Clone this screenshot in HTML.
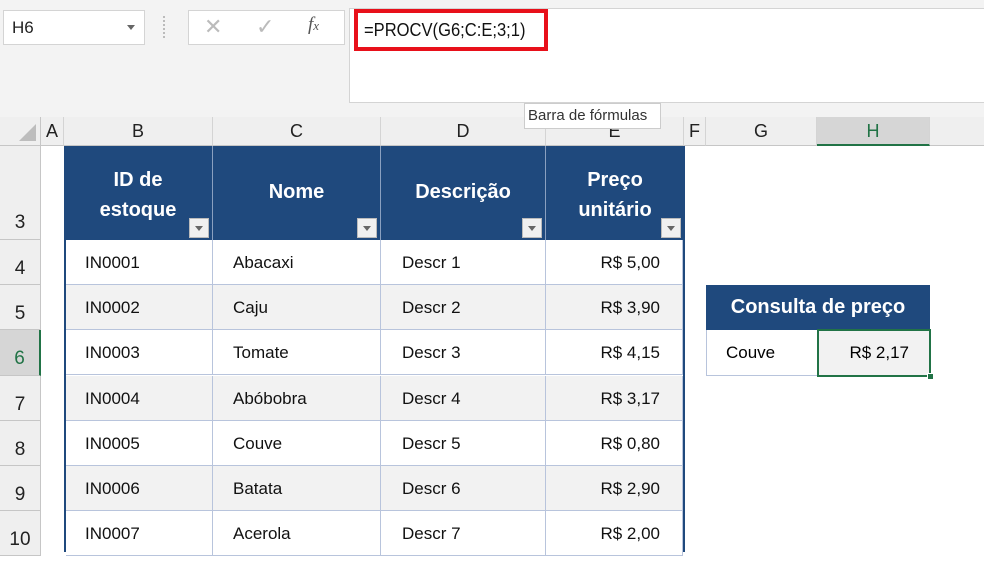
<!DOCTYPE html>
<html><head><meta charset="utf-8"><style>
*{margin:0;padding:0;box-sizing:border-box}
body{width:984px;height:552px;overflow:hidden;background:#fff;font-family:"Liberation Sans",Arial,sans-serif;position:relative}
.a{position:absolute}
.top{left:0;top:0;width:984px;height:117px;background:#f3f3f3}
.box{background:#fff;border:1px solid #d4d4d4}
.colh{top:117px;height:29px;background:#efefef;border-right:1px solid #d4d4d4;border-bottom:1px solid #c6c6c6;font-size:18px;color:#222;text-align:center;line-height:29px}
.rowh{left:0;width:41px;background:#efefef;border-bottom:1px solid #c6c6c6;border-right:1px solid #c6c6c6;font-size:19px;color:#222;text-align:center}
.cell{height:45px;border-right:1px solid #b8c4dc;border-bottom:1px solid #b8c4dc;font-size:17px;color:#111;line-height:45px}
.hd{top:146px;height:94px;background:#1f497d;color:#fff;font-weight:bold;font-size:20px;text-align:center;border-right:1px solid #8aa0c0}
.dd{position:absolute;width:20px;height:20px;background:#f0f0f0;border:1px solid #bbb;bottom:2px;right:3px}
.dd:after{content:"";position:absolute;left:5px;top:7px;border-left:4px solid transparent;border-right:4px solid transparent;border-top:5px solid #666}
</style></head><body>
<div class="a top"></div>
<div class="a box" style="left:3px;top:10px;width:142px;height:35px;font-size:17px;line-height:33px;padding-left:8px;color:#222">H6<span style="position:absolute;right:9px;top:14px;border-left:4px solid transparent;border-right:4px solid transparent;border-top:5px solid #666"></span></div>
<div class="a" style="left:163px;top:16px;width:2px;height:22px;border-left:2px dotted #bbb"></div>
<div class="a box" style="left:188px;top:10px;width:157px;height:35px"></div>
<div class="a" style="left:204px;top:14px;font-size:22px;color:#bbb">✕</div>
<div class="a" style="left:256px;top:14px;font-size:22px;color:#bbb">✓</div>
<div class="a" style="left:308px;top:14px;font-size:19px;color:#555;font-style:italic;font-family:'Liberation Serif',serif">f<span style="font-size:13px">x</span></div>
<div class="a box" style="left:349px;top:8px;width:640px;height:95px"></div>
<div class="a" style="left:354px;top:9px;width:194px;height:42px;border:4px solid #e8101a"></div>
<div class="a" style="left:364px;top:20px;font-size:18px;color:#111;transform:scaleX(0.92);transform-origin:left">=PROCV(G6;C:E;3;1)</div>
<div class="a colh" style="left:0;width:41px;border-right:1px solid #c6c6c6"><span style="position:absolute;left:19px;top:7px;border-left:17px solid transparent;border-bottom:17px solid #bdbdbd"></span></div>
<div class="a colh" style="left:41px;width:23px">A</div>
<div class="a colh" style="left:64px;width:149px">B</div>
<div class="a colh" style="left:213px;width:168px">C</div>
<div class="a colh" style="left:381px;width:165px">D</div>
<div class="a colh" style="left:546px;width:138px">E</div>
<div class="a colh" style="left:684px;width:22px">F</div>
<div class="a colh" style="left:706px;width:111px">G</div>
<div class="a colh" style="left:817px;width:113px;background:#d6d6d6;color:#217346;border-bottom:2px solid #217346">H</div>
<div class="a colh" style="left:930px;width:54px;border-right:none"></div>
<div class="a" style="left:524px;top:103px;width:137px;height:26px;background:#fff;border:1px solid #ccc;font-size:15px;line-height:24px;padding-left:3px;color:#333">Barra de fórmulas</div>
<div class="a rowh" style="top:146px;height:94px;line-height:154px">3</div>
<div class="a rowh" style="top:240px;height:45px;line-height:58px">4</div>
<div class="a rowh" style="top:285px;height:45px;line-height:58px">5</div>
<div class="a rowh" style="top:330px;height:46px;line-height:58px;background:#d6d6d6;color:#217346;border-right:2px solid #217346">6</div>
<div class="a rowh" style="top:376px;height:45px;line-height:58px">7</div>
<div class="a rowh" style="top:421px;height:45px;line-height:58px">8</div>
<div class="a rowh" style="top:466px;height:45px;line-height:58px">9</div>
<div class="a rowh" style="top:511px;height:45px;line-height:58px">10</div>
<div class="a hd" style="left:64px;width:149px;padding-top:19px;line-height:30px">ID de<br>estoque<div class="dd"></div></div>
<div class="a hd" style="left:213px;width:168px;line-height:92px">Nome<div class="dd"></div></div>
<div class="a hd" style="left:381px;width:165px;line-height:92px">Descrição<div class="dd"></div></div>
<div class="a hd" style="left:546px;width:138px;padding-top:19px;line-height:30px;border-right:none">Preço<br>unitário<div class="dd"></div></div>
<div class="a" style="left:64px;top:146px;width:2px;height:406px;background:#1f497d"></div>
<div class="a" style="left:683px;top:146px;width:2px;height:406px;background:#1f497d"></div>
<div id="t"></div>
<script>
var d=[["IN0001","Abacaxi","Descr 1","R$ 5,00"],["IN0002","Caju","Descr 2","R$ 3,90"],["IN0003","Tomate","Descr 3","R$ 4,15"],["IN0004","Abóbobra","Descr 4","R$ 3,17"],["IN0005","Couve","Descr 5","R$ 0,80"],["IN0006","Batata","Descr 6","R$ 2,90"],["IN0007","Acerola","Descr 7","R$ 2,00"]];
var tops=[240,285,330,376,421,466,511],cols=[[66,147,19],[213,168,20],[381,165,21],[546,137,0]],h="";
d.forEach(function(r,i){var bg=i%2?"#f2f2f2":"#fff";r.forEach(function(v,j){var c=cols[j];h+='<div class="a cell" style="left:'+c[0]+'px;top:'+tops[i]+'px;width:'+c[1]+'px;background:'+bg+';'+(j==3?'text-align:right;padding-right:22px;':'padding-left:'+c[2]+'px;')+'">'+v+'</div>';});});
document.getElementById("t").outerHTML=h;
</script>
<div class="a" style="left:706px;top:285px;width:224px;height:45px;background:#1f497d;color:#fff;font-weight:bold;font-size:20px;text-align:center;line-height:45px">Consulta de preço</div>
<div class="a" style="left:706px;top:330px;width:112px;height:46px;border:1px solid #b8c4dc;border-top:none;font-size:17px;line-height:45px;padding-left:19px">Couve</div>
<div class="a" style="left:817px;top:329px;width:114px;height:48px;border:2px solid #217346;background:#f2f2f2;font-size:17px;line-height:44px;text-align:right;padding-right:20px">R$ 2,17</div>
<div class="a" style="left:927px;top:373px;width:7px;height:7px;background:#217346;border:1px solid #fff"></div>
</body></html>
